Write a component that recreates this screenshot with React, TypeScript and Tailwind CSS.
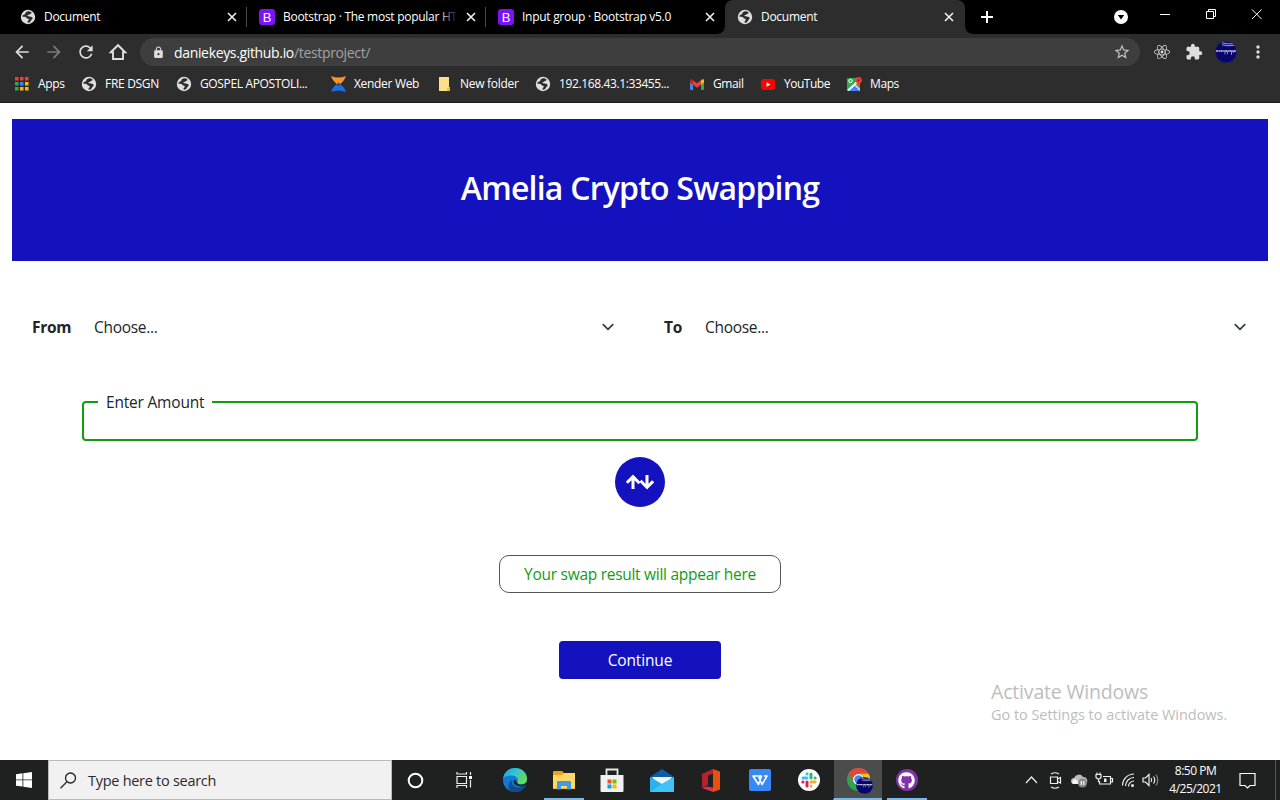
import type { ReactNode } from "react";
import { FaGithub, FaReact } from "react-icons/fa";
import {
  MdArrowBack,
  MdArrowForward,
  MdExtension,
  MdLock,
  MdMoreVert,
  MdRefresh,
  MdStarBorder,
} from "react-icons/md";

function Globe({ size = 16 }: { size?: number }) {
  return (
    <svg width={size} height={size} viewBox="0 0 16 16" className="shrink-0">
      <circle cx="8" cy="8" r="7.2" fill="#dedede" />
      <path
        d="M9 2.2C6.600 2 5.600 3 5.300 4.500c-.2 1.100-1.900 1-2.900 2.200l.2 1.200c1.900-.2 3.100.1 3.900 1 .8.800 2.300.5 2.300 1.600 0 1-1.300 1.200-1.500 3.100 1.700.4 3.100-.4 3.600-1.900.4-1.300 1.900-1.300 1.700-2.800-.2-1.200-1.500-1.300-2.700-1.500-1.200-.3-2.600.1-2.600-.8 0-.8 1.900-.4 2.300-1.300.3-.8 1.700-.5 2-1.400C11.300 3 10.200 2.300 9 2.200z"
        fill="#2d2d2d"
      />
    </svg>
  );
}

function BootstrapIcon() {
  return (
    <span className="flex size-4 shrink-0 items-center justify-center rounded-[3px] bg-[#7a13f6] font-['Liberation_Sans'] text-[13px] leading-none text-white">
      B
    </span>
  );
}

function Cross({ className }: { className?: string }) {
  return (
    <svg width="10" height="10" viewBox="0 0 10 10" className={className} stroke="#f1f1f1" strokeWidth="1.6">
      <path d="M1 1l8 8M9 1L1 9" />
    </svg>
  );
}

function Tab({ icon, title, separator, fade }: { icon: ReactNode; title: string; separator?: boolean; fade?: boolean }) {
  return (
    <div className="flex h-[34px] w-[239px] shrink-0 items-center pl-3">
      {icon}
      <div className="relative ml-2 w-[175px] overflow-hidden whitespace-nowrap text-[12px] tracking-[-0.28px] text-white">
        {title}
        {fade && <span className="absolute inset-y-0 right-0 w-5 bg-gradient-to-r from-transparent to-black" />}
      </div>
      <Cross className="ml-2" />
      {separator && <div className="ml-[9px] h-5 w-px bg-[#4a4a4a]" />}
    </div>
  );
}

function Bookmark({ icon, label, width, track }: { icon: ReactNode; label: string; width: string; track: string }) {
  return (
    <div className={`flex shrink-0 items-center gap-[9px] whitespace-nowrap text-[12px] text-white ${width}`}>
      <span className="flex w-[14px] shrink-0 justify-center">{icon}</span>
      <span className={track}>{label}</span>
    </div>
  );
}

function AppsIcon() {
  const colors = ["#ea4335", "#ea4335", "#ea4335", "#34a853", "#4285f4", "#fbbc05", "#34a853", "#fbbc05", "#fbbc05"];
  return (
    <svg width="14" height="14" viewBox="0 0 14 14" className="shrink-0">
      {colors.map((c, i) => (
        <rect key={i} x={(i % 3) * 5} y={Math.floor(i / 3) * 5} width="3.5" height="3.5" fill={c} />
      ))}
    </svg>
  );
}

function XenderIcon() {
  return (
    <svg width="15" height="16" viewBox="0 0 15 16" className="shrink-0">
      <path d="M0 0q7.500 3 15 0-1 4-5.500 8h-4Q1 4 0 0z" fill="#f9932b" />
      <path d="M5.500 8h4q4.500 4 5.500 8-7.500-3-15 0 1-4 5.500-8z" fill="#1672e8" />
      <path d="M5 8.500L7.500 6.500l2.500 2-2.500 1.700z" fill="#62452f" />
    </svg>
  );
}

function FolderIcon() {
  return (
    <svg width="13" height="14" viewBox="0 0 13 14" className="shrink-0">
      <path d="M1 0h10v10h1v4H1z" fill="#fbe08a" />
      <path d="M9 14v-3l3-1v4z" fill="#e7b93e" />
    </svg>
  );
}

function GmailIcon() {
  return (
    <svg width="14" height="11" viewBox="0 0 14 11" className="shrink-0">
      <path d="M0 2l3 2v7H1a1 1 0 01-1-1z" fill="#4285f4" />
      <path d="M11 4l3-2v8a1 1 0 01-1 1h-2z" fill="#34a853" />
      <path d="M11 1.200L12 .5c1-.7 2 0 2 1v2l-3 2.300z" fill="#fbbc04" />
      <path d="M3 1.200l4 3 4-3v4.600l-4 3-4-3z" fill="#ea4335" />
      <path d="M0 1.500C0 .4 1.200-.2 2 .5l1 .7v4.600L0 3.500z" fill="#c5221f" />
    </svg>
  );
}

function YouTubeIcon() {
  return (
    <svg width="14" height="11" viewBox="0 0 14 11" className="shrink-0">
      <rect width="14" height="11" rx="2.500" fill="#f00" />
      <path d="M5.500 3.200v4.600l4-2.300z" fill="#fff" />
    </svg>
  );
}

function MapsIcon() {
  return (
    <svg width="15" height="15" viewBox="0 0 15 15" className="shrink-0">
      <rect y="1" width="13" height="13" rx="1" fill="#34a853" />
      <path d="M1 14l6-6 6 6z" fill="#4285f4" />
      <path d="M0 13L13 1v3L2 14z" fill="#fff" />
      <path d="M8 7l5 5v2l-6-6z" fill="#e4e4e4" />
      <circle cx="3.500" cy="4" r="1.700" fill="none" stroke="#fff" />
      <path d="M11.500 0A3.300 3.300 0 008.200 3.300C8.200 6 11 6.500 11.500 10 12 6.500 14.800 6 14.800 3.300A3.300 3.300 0 0011.500 0z" fill="#ea4335" />
      <circle cx="11.500" cy="3.300" r="1.100" fill="#8c1d18" />
    </svg>
  );
}

function Avatar({ size }: { size: number }) {
  return (
    <svg width={size} height={size} viewBox="0 0 22 22" className="shrink-0">
      <circle cx="11" cy="11" r="10.800" fill="#05056c" stroke="#3a3a60" strokeWidth=".4" />
      <path d="M7 1.800q5 1.500 10.500 1M7 3.800q6 1.800 12 .5" stroke="#c5c5e0" strokeWidth=".8" fill="none" />
      <path d="M1 10h20" stroke="#c5c5d8" strokeWidth="1.600" strokeDasharray="2.500 .4 1.200 .3" />
      <path d="M10 10v3.500M12.500 10v3M16.500 10v4M18.500 10v2" stroke="#b0b0d0" strokeWidth=".8" />
    </svg>
  );
}

function BrowserChrome() {
  return (
    <header className="h-[103px] border-b border-[#1b1b1b] bg-[#2d2d2d]">
      <div className="flex h-[34px] bg-black pl-2">
        <Tab icon={<Globe />} title="Document" separator />
        <Tab icon={<BootstrapIcon />} title="Bootstrap · The most popular HTM" separator fade />
        <Tab icon={<BootstrapIcon />} title="Input group · Bootstrap v5.0" />
        <div className="relative w-[240px] shrink-0 rounded-t-lg bg-[#2d2d2d]">
          <Tab icon={<Globe />} title="Document" />
          <svg className="absolute bottom-0 -left-2" width="8" height="8" viewBox="0 0 8 8">
            <path d="M8 0v8H0a8 8 0 008-8z" fill="#2d2d2d" />
          </svg>
          <svg className="absolute -right-2 bottom-0" width="8" height="8" viewBox="0 0 8 8">
            <path d="M0 0v8h8a8 8 0 01-8-8z" fill="#2d2d2d" />
          </svg>
        </div>
        <svg width="12" height="12" viewBox="0 0 12 12" className="mt-[11px] ml-4 shrink-0" stroke="#fff" strokeWidth="2">
          <path d="M6 0v12M0 6h12" />
        </svg>
        <svg width="14" height="14" viewBox="0 0 14 14" className="mt-[10px] ml-[121px] shrink-0">
          <circle cx="7" cy="7" r="7" fill="#fff" />
          <path d="M3.800 5h6.400L7 9.500z" fill="#000" />
        </svg>
        <svg width="104" height="12" viewBox="0 0 104 12" className="mt-2 ml-[31px] shrink-0" fill="none" stroke="#fff">
          <path d="M1 6.500h10M47.500 3.500h7v7h-7zM49.500 3.500v-2h7v7h-2M93 1.500l9.500 9.500M102.500 1.500L93 11" />
        </svg>
      </div>

      <div className="flex h-9 items-center pl-3 text-[#dedede]">
        <MdArrowBack size={20} className="mr-3" />
        <MdArrowForward size={20} className="mr-3 text-[#7b7b7b]" />
        <MdRefresh size={20} className="mr-3" />
        <svg width="20" height="20" viewBox="0 0 20 20" fill="none" stroke="#dedede" strokeWidth="1.900">
          <path d="M2.800 10.300L10 3.200l7.200 7.100H15V17H5v-6.700z" />
        </svg>
        <div className="ml-3 flex h-7 w-[1000px] items-center rounded-full bg-[#3e3e3e] pr-[9px] pl-3">
          <MdLock size={13} />
          <span className="ml-[9px] flex-1 text-[14px] tracking-[-0.34px] text-white">
            daniekeys.github.io<span className="text-[#a3a3a3]">/testproject/</span>
          </span>
          <MdStarBorder size={18} className="text-[#c2c2c2]" />
        </div>
        <FaReact size={16} className="ml-[14px]" />
        <MdExtension size={18} className="mr-3 ml-[15px]" />
        <Avatar size={22} />
        <MdMoreVert size={20} className="ml-[11px]" />
      </div>

      <nav className="flex h-7 items-center pl-[15px]">
        <Bookmark icon={<AppsIcon />} label="Apps" width="w-[67px]" track="tracking-[-0.3px]" />
        <Bookmark icon={<Globe />} label="FRE DSGN" width="w-[95px]" track="tracking-[-0.3px]" />
        <Bookmark icon={<Globe />} label="GOSPEL APOSTOLI..." width="w-[154px]" track="tracking-[-0.35px]" />
        <Bookmark icon={<XenderIcon />} label="Xender Web" width="w-[106px]" track="tracking-[-0.32px]" />
        <Bookmark icon={<FolderIcon />} label="New folder" width="w-[99px]" track="tracking-[-0.28px]" />
        <Bookmark icon={<Globe />} label="192.168.43.1:33455..." width="w-[154px]" track="tracking-[-0.38px]" />
        <Bookmark icon={<GmailIcon />} label="Gmail" width="w-[71px]" track="tracking-[-0.4px]" />
        <Bookmark icon={<YouTubeIcon />} label="YouTube" width="w-[86px]" track="tracking-[-0.48px]" />
        <Bookmark icon={<MapsIcon />} label="Maps" width="w-[60px]" track="tracking-[-0.4px]" />
      </nav>
    </header>
  );
}

function CoinSelect({ label, labelClass, className }: { label: string; labelClass: string; className: string }) {
  return (
    <div className={`flex h-[38px] items-center text-[15.5px] tracking-[-0.3px] ${className}`}>
      <span className={`pt-[2px] font-bold ${labelClass}`}>{label}</span>
      <span className="flex-1 pt-[2px]">Choose...</span>
      <svg width="16" height="16" viewBox="0 0 16 16" fill="none" stroke="#343a40" strokeWidth="1.700" strokeLinecap="round" strokeLinejoin="round">
        <path d="M3.300 5.700L8 10.300l4.700-4.600" />
      </svg>
    </div>
  );
}

function SwapPage() {
  return (
    <main className="relative flex h-[657px] flex-col items-center bg-white pt-4 text-[#212529]">
      <div className="flex h-[142px] w-[1256px] items-center justify-center bg-[#1412be] pb-1">
        <h1 className="text-[32px] font-semibold tracking-[-0.78px] text-white">Amelia Crypto Swapping</h1>
      </div>
      <div className="mt-[47px] flex w-[1256px]">
        <CoinSelect label="From" labelClass="w-[62px]" className="w-[636px] pr-8 pl-5" />
        <CoinSelect label="To" labelClass="w-[41px]" className="w-[620px] pr-5 pl-4" />
      </div>
      <div className="relative mt-[55px] h-10 w-[1116px] rounded-[4px] border-2 border-[#149b14]">
        <label className="absolute -top-3 left-[14px] flex h-6 w-[114px] items-center bg-white pl-2 text-[15.5px] tracking-[-0.2px]">
          Enter Amount
        </label>
      </div>
      <button className="mt-4 flex size-[50px] items-center justify-center rounded-full bg-[#1412be]">
        <svg width="28" height="16" viewBox="0 0 28 16" fill="none" stroke="#fff" strokeWidth="3">
          <path d="M7 15V3M.9 8.800L7 2.700l6.500 6.500" />
          <path d="M21 1v12M14.500 6.800l6.500 6.500 6.100-6.100" />
        </svg>
      </button>
      <div className="mt-12 flex h-[38px] w-[282px] items-center justify-center rounded-[10px] border border-[#555] pt-[2px] text-[15.5px] tracking-[-0.28px] text-[#149b14]">
        Your swap result will appear here
      </div>
      <button className="mt-12 h-[38px] w-[162px] rounded-[4px] bg-[#1412be] pt-[2px] text-[15.5px] tracking-[-0.15px] text-white">Continue</button>
      <div className="absolute top-[577px] left-[991px] whitespace-nowrap text-[#bdbdbd]">
        <div className="text-[19.5px] leading-6 tracking-[-0.18px]">Activate Windows</div>
        <div className="text-[14.5px] leading-[22px] tracking-[-0.04px]">Go to Settings to activate Windows.</div>
      </div>
    </main>
  );
}

function Slot({ children, state = "" }: { children: ReactNode; state?: string }) {
  return <div className={`flex h-10 w-[49px] shrink-0 items-center justify-center ${state}`}>{children}</div>;
}

function EdgeIcon() {
  return (
    <svg width="24" height="24" viewBox="0 0 24 24">
      <defs>
        <linearGradient id="edgeTop" x1="0" x2="1" y1="0" y2=".6">
          <stop offset="0" stopColor="#1a9bdc" />
          <stop offset=".5" stopColor="#34c6d0" />
          <stop offset="1" stopColor="#66dc50" />
        </linearGradient>
      </defs>
      <circle cx="12" cy="12" r="12" fill="#0f7bd6" />
      <path d="M.2 10C1.500 4 6 0 12 0c7 0 12 5 12 10.500 0 4-3 6-6.300 6-3 0-4.200-1.200-3.400-2.300C16 11 13.500 7.500 9 7.500c-4 0-7 1-8.800 2.500z" fill="url(#edgeTop)" />
      <path d="M9 12c-1.500 6 5 9.500 13 6-2 4-6 6-10 6C5 24 3 17 9 12z" fill="#114a8b" />
      <path d="M11.500 11.500c-2.500 3 1 7 6.500 7 2 0 3.500-.5 4.500-1.500H24v-3c-2 3-9 3.500-9.700.7z" fill="#202222" />
    </svg>
  );
}

function ExplorerIcon() {
  return (
    <svg width="22" height="19" viewBox="0 0 22 19">
      <path d="M0 1q0-1 1-1h8l2 2h11v16H0z" fill="#e8a317" />
      <path d="M0 4h9l2-2h11v15.500H0z" fill="#ffd765" />
      <path d="M4 18.500v-7.500q0-1 1-1h12q1 0 1 1v7.500h-4V15H8v3.500z" fill="#3f9be4" />
    </svg>
  );
}

function StoreIcon() {
  return (
    <svg width="24" height="25" viewBox="0 0 24 25">
      <path d="M6.500 8V1.500h11V8" fill="none" stroke="#e8e8e8" strokeWidth="1.800" />
      <path d="M.5 7h23v16q0 1-1 1h-21q-1 0-1-1z" fill="#f1f1f1" />
      <path d="M7.500 11.500h4v4h-4z" fill="#f25022" />
      <path d="M12.500 11.500h4v4h-4z" fill="#7fba00" />
      <path d="M7.500 16.500h4v4h-4z" fill="#00a4ef" />
      <path d="M12.500 16.500h4v4h-4z" fill="#ffb900" />
    </svg>
  );
}

function MailIcon() {
  return (
    <svg width="24" height="23" viewBox="0 0 24 23">
      <path d="M0 8L12 0l12 8v5H0z" fill="#0c5cad" />
      <path d="M2 8h20l-5 7H7z" fill="#f1f5f8" />
      <path d="M0 8l12 7 12-7v15H0z" fill="#2bb1ee" />
      <path d="M0 23l12-8L24 8v15z" fill="#45c2f5" />
    </svg>
  );
}

function OfficeIcon() {
  return (
    <svg width="18" height="23" viewBox="0 0 18 23">
      <path d="M0 5l11-5 2 4-7 2.500V16l-6 3z" fill="#b3232d" />
      <path d="M11 0l7 2.500v18L11 23z" fill="#e8500f" />
      <path d="M0 19l5-1.500 6 1V23z" fill="#d8344f" />
    </svg>
  );
}

function WpsIcon() {
  return (
    <svg width="22" height="22" viewBox="0 0 22 22" fill="none" stroke="#fff" strokeWidth="1.600" strokeLinejoin="round">
      <rect width="22" height="22" rx="2" fill="#3888f5" stroke="none" />
      <path d="M4 7h8.500l-3 8.500zM9.800 8l3.200 7.500L18 7h-3" />
    </svg>
  );
}

function SlackIcon() {
  return (
    <svg width="22" height="22" viewBox="0 0 22 22" strokeWidth="3" strokeLinecap="round">
      <circle cx="11" cy="11" r="11" fill="#fff" />
      <path d="M5 9h4M9 4.700V5" stroke="#36c5f0" />
      <path d="M13 5v4M17 9h.2" stroke="#2eb67d" />
      <path d="M13 13h4M13 17v.2" stroke="#ecb22e" />
      <path d="M9 13v4M5 13h-.2" stroke="#e01e5a" />
    </svg>
  );
}

function ChromeIcon() {
  return (
    <span className="relative mb-px block size-[23px]">
      <svg width="23" height="23" viewBox="0 0 24 24">
        <circle cx="12" cy="12" r="12" fill="#32a350" />
        <path d="M1.600 6A12 12 0 0122.400 6H12a6 6 0 00-5.200 9z" fill="#e2473c" />
        <path d="M22.400 6A12 12 0 0112 24l5.200-9A6 6 0 0012 6z" fill="#fbc116" />
        <circle cx="12" cy="12" r="5.700" fill="#fff" />
        <circle cx="12" cy="12" r="4.400" fill="#4285f4" />
      </svg>
      <span className="absolute top-[9px] left-[9px]">
        <Avatar size={17} />
      </span>
    </span>
  );
}

function TrayIcons() {
  return (
    <svg width="136" height="20" viewBox="0 0 136 20" className="shrink-0" fill="none" stroke="#eee" strokeWidth="1.200">
      <path d="M1 13l5.500-6 5.500 6" />
      <path d="M25.500 7h7v6.500h-7zM32.500 9l3-1.500v5.500l-3-1.500M26 4q4-2.500 8 0M26 17q4 2.500 8 0" />
      <g stroke="none">
        <path d="M49 14a3 3 0 010-6 5 5 0 019-1 4 4 0 013 7z" fill="#bcbcbc" />
        <path d="M48 14a3 3 0 012-5l7 5z" fill="#f4f4f4" />
        <circle cx="57.500" cy="13" r="4.500" fill="#888" />
        <path d="M55.700 11h1.200v4h-1.200zM58.200 11h1.200v4h-1.200z" fill="#fff" />
      </g>
      <path d="M78 6.500h7.500v7.500h-11v-3M85.500 8.500H87.500v3.500h-2M71 4.500h5v3q-2.500 3-5 0zM72 4.500v-2M75 4.500v-2M73.500 9v3" />
      <path d="M79 8.500h2.500V12H79z" fill="#eee" stroke="none" />
      <path d="M97.500 15.500a11.500 11.500 0 0111.500-11.500M100.500 16a8.500 8.500 0 018.500-8.500M103.500 16.500a5.500 5.500 0 015.500-5.500" />
      <circle cx="107.500" cy="15.500" r="1.500" fill="#eee" stroke="none" />
      <path d="M118 8h2.500L124 4.500v11L120.500 12H118zM126 8q1.500 2 0 4M128.500 6.500q2.500 3.500 0 7" />
      <path d="M131 4.500q3.500 5.500 0 11" stroke="#888" />
    </svg>
  );
}

function Taskbar() {
  return (
    <footer className="flex h-10 bg-[#1f2121]">
      <div className="flex w-12 items-center justify-center">
        <svg width="16" height="16" viewBox="0 0 16 16" fill="#fff">
          <path d="M0 2.200L6.500 1.300v6.200H0zM7.300 1.200L16 0v7.500H7.300zM0 8.300h6.500v6.300L0 13.700zM7.300 8.300H16V16l-8.700-1.200z" />
        </svg>
      </div>
      <div className="flex w-[344px] items-center border border-[#b9b9b9] bg-[#f1f1f1] pl-[11px] text-[#2b2b2b]">
        <svg width="17" height="17" viewBox="0 0 17 17" fill="none" stroke="#222" strokeWidth="1.300">
          <circle cx="10.500" cy="6" r="5" />
          <path d="M7 9.600L.5 16.200" />
        </svg>
        <span className="ml-[11px] pt-[2px] text-[14.5px] tracking-[-0.28px]">Type here to search</span>
      </div>
      <div className="flex">
        <Slot state="pr-[2px]">
          <svg width="17" height="17" viewBox="0 0 17 17" fill="none" stroke="#fff" strokeWidth="2">
            <circle cx="8.500" cy="8.500" r="6.800" />
          </svg>
        </Slot>
        <Slot state="pr-[2px]">
          <svg width="17" height="16" viewBox="0 0 17 16" fill="none" stroke="#eee" strokeWidth="1.200">
            <path d="M1 4.500h9.500v7H1zM1 0v2h9.500V0M1 16v-2.500h9.500V16M14.500 0v3M14.500 8v7.500" />
            <path d="M13 4h3v3h-3z" fill="#fff" stroke="none" />
          </svg>
        </Slot>
        <Slot><EdgeIcon /></Slot>
        <Slot state="bg-[linear-gradient(#76b9ed,#76b9ed)] bg-[length:40px_2px] bg-[position:5px_38px] bg-no-repeat"><ExplorerIcon /></Slot>
        <Slot state="pr-px"><StoreIcon /></Slot>
        <Slot><MailIcon /></Slot>
        <Slot><OfficeIcon /></Slot>
        <Slot><WpsIcon /></Slot>
        <Slot><SlackIcon /></Slot>
        <Slot state="border-b-2 border-b-[#76b9ed] border-l border-l-[#1f2121] bg-[#4b4d4d] pt-[2px]"><ChromeIcon /></Slot>
        <Slot state="bg-[linear-gradient(#76b9ed,#76b9ed)] bg-[length:40px_2px] bg-[position:5px_38px] bg-no-repeat">
          <span className="flex size-[22px] items-center justify-center rounded-full bg-[#8132a8]">
            <FaGithub size={17} color="#fff" />
          </span>
        </Slot>
      </div>
      <div className="ml-auto flex items-center text-white">
        <TrayIcons />
        <div className="ml-[2px] w-[65px] whitespace-nowrap text-center text-[12px] leading-[18px] tracking-[-0.5px]">
          <div>8:50 PM</div>
          <div>4/25/2021</div>
        </div>
        <svg width="17" height="17" viewBox="0 0 17 17" className="mr-[19px] ml-[11px]" fill="none" stroke="#fff" strokeWidth="1.200">
          <path d="M1 1.500h15v12h-5L8.500 16 6 13.500H1z" />
        </svg>
        <div className="mr-[4px] h-10 w-px bg-[#555]" />
      </div>
    </footer>
  );
}

export default function App() {
  return (
    <div className="h-[800px] w-[1280px] overflow-hidden font-['Open_Sans',sans-serif]">
      <BrowserChrome />
      <SwapPage />
      <Taskbar />
    </div>
  );
}
